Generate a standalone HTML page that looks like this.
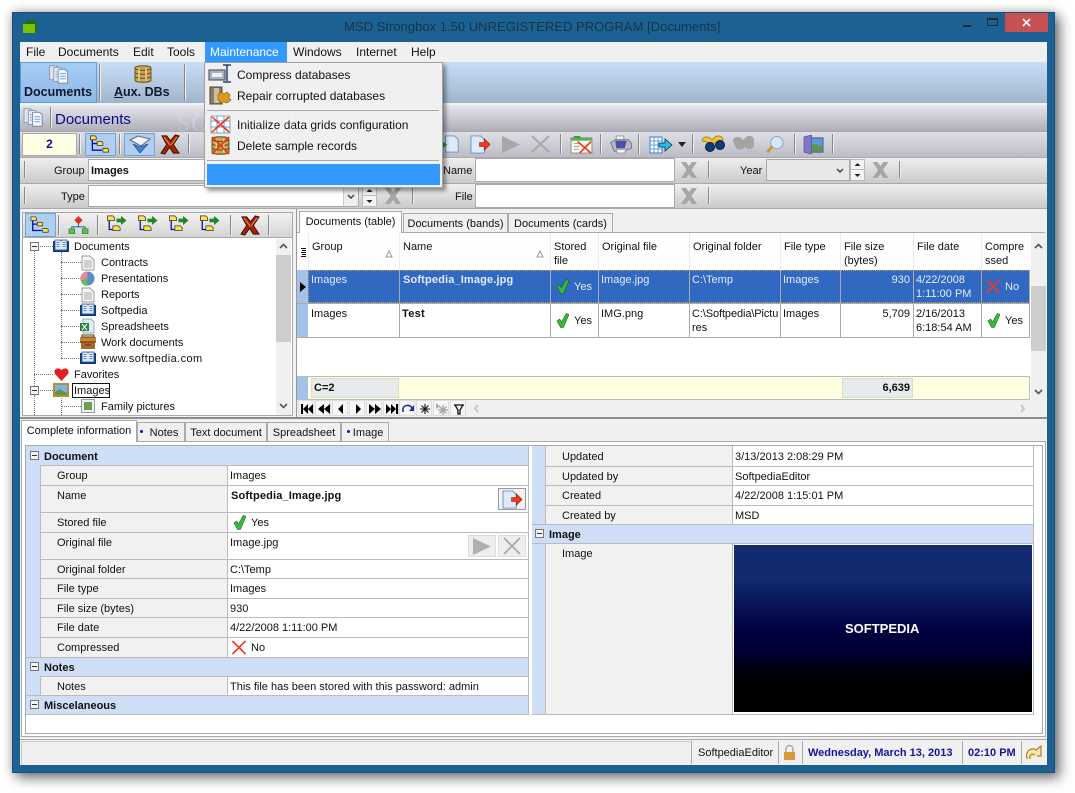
<!DOCTYPE html>
<html><head><meta charset="utf-8"><title>MSD Strongbox</title>
<style>
html,body{margin:0;padding:0;width:1075px;height:793px;overflow:hidden;background:#fff}
body{font:11px/14px "Liberation Sans",sans-serif;color:#111;position:relative}
div,span.a,svg.a{position:absolute;box-sizing:border-box}
.t{white-space:nowrap;height:14px;line-height:14px;margin-top:1px}
.m{font-size:12px;margin-top:0}
.b{font-weight:bold}
.w{color:#e4ecf8}
.l{background:#aaa}
.sep{width:1px;background:#888;border-right:1px solid #eee;width:2px}
.tab{background:#f0f0f0;border:1px solid #aaa;border-bottom:0;text-align:center;line-height:21px;white-space:nowrap}
.gridc{background:#fff}
.lab{background:#f1f1f1}
.sec{background:#cddef6}
.box{width:9px;height:9px;border:1px solid #777;background:#f4f4f4}
.box:after{content:"";position:absolute;left:1px;top:3px;width:5px;height:1px;background:#333}
.dh{border-top:1px dotted #777;height:1px}
.dv{border-left:1px dotted #777;width:1px}
.inp{background:#fff;border:1px solid #aaa}
.nb{width:16px;height:16px;top:400px;background:#f6f6f6;border:1px solid #ddd}
.nb svg{position:absolute;left:1px;top:1px}
</style></head>
<body>
<svg width="0" height="0" style="position:absolute">
<defs>
<symbol id="chk" viewBox="0 0 14 16"><path d="M1 9l3-2 2 3 5-9 3 1-6 14H5z" fill="#3cb83c" stroke="#0c6a12" stroke-width=".6"/></symbol>
<symbol id="rx" viewBox="0 0 16 16"><path d="M1 1l14 14M15 1L1 15" stroke="#ee3a1c" stroke-width="1.800" fill="none"/></symbol>
<symbol id="gx" viewBox="0 0 20 20"><path d="M2 2h5l3 4 3-4h5l-5.500 8L18 18h-5l-3-4-3 4H2l5.500-8z" fill="#a6a6a6"/></symbol>
<symbol id="bx" viewBox="0 0 22 22"><path d="M2 2h5l4 5 5-6 4 1-6 9 6 9h-6l-4-6-5 7-4-1 6-9z" fill="#a12408" stroke="#3b1000" stroke-width="1"/><path d="M4 3l7 9M18 3l-6 8" stroke="#f0a060" stroke-width="1"/></symbol>
<symbol id="tr" viewBox="0 0 22 22"><path d="M3 5v12h10M3 10h6" stroke="#0c0ca0" stroke-width="1.400" fill="none"/><path d="M1 2h5l1 1v3H1zM8 8h5l1 1v3H8zM14 15h5l1 1v3h-6z" fill="#ffe24a" stroke="#333" stroke-width=".8"/></symbol>
<symbol id="doc" viewBox="0 0 24 22"><path d="M1 1h8l2 2v14H1z" fill="#dde4f0" stroke="#8a94a8"/><path d="M6 3h8l2 2v14H6z" fill="#e6ecf8" stroke="#8a94a8"/><path d="M11 5h8l3 3v13H11z" fill="#f4f8ff" stroke="#6f7ea0"/><path d="M13 10h7M13 13h7M13 16h7M8 8h2M8 11h2M8 14h2" stroke="#5c9ae0"/></symbol>
<symbol id="db" viewBox="0 0 18 18"><path d="M1 3c0-3 16-3 16 0v12c0 3-16 3-16 0z" fill="#c6a45a" stroke="#6c5416"/><path d="M1 3c0 3 16 3 16 0M1 7c0 3 16 3 16 0M1 11c0 3 16 3 16 0" fill="none" stroke="#6c5416"/><path d="M5 3v13M12 3v13" stroke="#e8d08c" stroke-width="1.500"/></symbol>
<symbol id="book" viewBox="0 0 16 14"><path d="M0 2h16v11H0z" fill="#123c78"/><path d="M2 1h5.500l.5 1 .5-1H14v10H2z" fill="#d9e8f8" stroke="#1f4c8a" stroke-width=".7"/><path d="M3.500 3.500h3M3.500 5.500h3M3.500 7.500h3M9.500 3.500h3M9.500 5.500h3M9.500 7.500h3" stroke="#6b8fbb"/></symbol>
<symbol id="pg" viewBox="0 0 14 16"><path d="M1 1h8l4 4v10H1z" fill="#f6f6f6" stroke="#999"/><path d="M3 6h8M3 8h8M3 10h8M3 12h8" stroke="#aaa"/></symbol>
<symbol id="pgr" viewBox="0 0 22 20"><path d="M1 1h10l4 4v14H1z" fill="#dfeafa" stroke="#6a90c8"/><path d="M10 8h5V4l6 6-6 6v-4h-5z" fill="#ee3a22" stroke="#a01808" stroke-width=".7"/></symbol>
<symbol id="pgg" viewBox="0 0 22 20"><path d="M5 1h10l4 4v14H5z" fill="#dfeafa" stroke="#6a90c8"/><path d="M1 7v8l6-4z" fill="#1b9a30"/></symbol>
<symbol id="tbl" viewBox="0 0 24 18"><path d="M1 1h12v16H1z" fill="#fff" stroke="#3a7ccc"/><path d="M1 5h12M1 9h12M1 13h12M5 1v16M9 1v16" stroke="#5aa0e8"/><path d="M10 7h6V3l7 6-7 6v-4h-6z" fill="#24c0ea" stroke="#103050" stroke-width=".8"/></symbol>
<symbol id="pgx" viewBox="0 0 24 20"><path d="M1 3h22v16H1z" fill="#faf8ef" stroke="#888"/><path d="M1 3h22v3H1z" fill="#5cb05c"/><path d="M4 1h6l2 2H4z" fill="#3c9a3c"/><path d="M4 9h7M4 12h6M4 15h5" stroke="#a0a0a0"/><path d="M8 7l14 12M22 7L10 19" stroke="#ee4020" stroke-width="1.800"/></symbol>
<symbol id="prt" viewBox="0 0 24 20"><path d="M7 1h8v6H7z" fill="#eee" stroke="#999"/><path d="M1 8l5-3h14l3 4v5l-8 3H5z" fill="#b6bac2" stroke="#777"/><path d="M6 6h12l-2 8H7z" fill="#4a50a8"/><path d="M8 15h10l-3 4H7z" fill="#f4f4f4" stroke="#999"/></symbol>
<symbol id="bin" viewBox="0 0 24 18"><path d="M1 6c0-4 5-5 8-3l2 2 3-3c3-2 8-1 8 3l-5 3H9z" fill="#f2c232" stroke="#a67c10" stroke-width=".8"/><circle cx="9" cy="12" r="4.500" fill="#123c78" stroke="#0a1c40"/><circle cx="19" cy="10" r="4.500" fill="#123c78" stroke="#0a1c40"/></symbol>
<symbol id="gbin" viewBox="0 0 24 18"><path d="M1 6c0-4 5-5 8-3l2 2 3-3c3-2 8-1 8 3v6c-2 4-7 4-9 1-2 4-9 3-10-1z" fill="#a4a4a4"/><path d="M16 16h1M19 16h1M22 16h1" stroke="#999"/></symbol>
<symbol id="mag" viewBox="0 0 20 20"><circle cx="12" cy="8" r="6.500" fill="#d4e8f4" stroke="#8aa4b8"/><path d="M7 12l-5 6" stroke="#d89030" stroke-width="3"/></symbol>
<symbol id="door" viewBox="0 0 22 20"><path d="M7 3h14v15H7z" fill="#5b9ad8" stroke="#50508a"/><path d="M8 12l5-3 7 4v4H8z" fill="#5c9a40"/><path d="M1 2l8-2v20l-8-2z" fill="#7c78c8" stroke="#50508a" stroke-width=".7"/></symbol>
<symbol id="img" viewBox="0 0 16 14"><path d="M0 0h16v14H0z" fill="#b88a3c"/><path d="M2 2h12v10H2z" fill="#7cb4e8"/><path d="M2 9l4-3 8 4v2H2z" fill="#5c9a40"/></symbol>
<symbol id="pic" viewBox="0 0 14 14"><path d="M.500.500h13v13H.500z" fill="#eef2f6" stroke="#999"/><path d="M3 3h8v8H3z" fill="#6ca050"/></symbol>
<symbol id="org" viewBox="0 0 22 20"><path d="M11 1l4 4-4 4-4-4z" fill="#ee2a10" stroke="#a01808" stroke-width=".5"/><path d="M11 9v3M4 16v-4h14v4" stroke="#1060a0" fill="none"/><path d="M1 14h6v5H1zM15 14h6v5h-6z" fill="#5cc050" stroke="#2a8020" stroke-width=".7"/></symbol>
<symbol id="arr" viewBox="0 0 22 22"><path d="M3 3v13h6" stroke="#0c0ca0" stroke-width="1.400" fill="none"/><path d="M1 1h6l2 2v3H1zM7 12h6l2 2v3H7z" fill="#ffe24a" stroke="#333" stroke-width=".8"/><path d="M11 4h5V1l6 5-6 5V8h-5z" fill="#1c8a24"/></symbol>
</defs>
</svg>

<!-- window -->
<div style="left:12px;top:12px;width:1043px;height:761px;background:#1b6192;border:1px solid #175078;box-shadow:5px 5px 12px rgba(0,0,0,.5),0 0 10px rgba(0,0,0,.25)"></div>
<svg class="a" style="left:23px;top:19px" width="14" height="15" viewBox="0 0 14 15"><path d="M3 1h10v5H3z" fill="#1d6a20"/><path d="M0 5h12v9H0z" fill="#7cc000"/><path d="M12 6h2v6l-2 2z" fill="#2e6a10"/></svg>
<div class="t" style="left:344px;top:19px;font-size:13.050px;line-height:16px;height:16px;color:#16344a;margin-top:0">MSD Strongbox 1.50 UNREGISTERED PROGRAM [Documents]</div>
<div style="left:963px;top:25px;width:8px;height:2px;background:#1c2c38"></div>
<div style="left:987px;top:18px;width:11px;height:8px;border:1px solid #1c2c38;border-top-width:2px"></div>
<div style="left:1005px;top:13px;width:43px;height:19px;background:#c75050"></div>
<svg class="a" style="left:1022px;top:18px" width="9" height="9"><path d="M1 1l7 7M8 1L1 8" stroke="#fff" stroke-width="1.600"/></svg>

<!-- client -->
<div style="left:20px;top:42px;width:1027px;height:723px;background:#f0f0f0"></div>

<!-- menu bar -->
<div style="left:205px;top:42px;width:82px;height:20px;background:#3399ff"></div>
<div class="t m" style="left:26px;top:45px">File</div>
<div class="t m" style="left:58px;top:45px">Documents</div>
<div class="t m" style="left:133px;top:45px">Edit</div>
<div class="t m" style="left:167px;top:45px">Tools</div>
<div class="t m" style="left:210px;top:45px;color:#fff">Maintenance</div>
<div class="t m" style="left:293px;top:45px">Windows</div>
<div class="t m" style="left:356px;top:45px">Internet</div>
<div class="t m" style="left:411px;top:45px">Help</div>

<!-- big toolbar -->
<div style="left:20px;top:62px;width:1027px;height:41px;background:linear-gradient(#c9def8,#a1b4cc)"></div>
<div style="left:20px;top:62px;width:77px;height:41px;background:linear-gradient(#a6cdf4,#8fb8e4);border:1px solid #5c9cdc"></div>
<div class="sep" style="left:99px;top:64px;height:37px"></div>
<div class="sep" style="left:184px;top:64px;height:37px"></div>
<svg class="a" style="left:47px;top:65px" width="24" height="19"><use href="#doc" width="24" height="19"/></svg>
<svg class="a" style="left:134px;top:65px" width="18" height="18"><use href="#db" width="18" height="18"/></svg>
<div class="t b m" style="left:24px;top:85px;font-size:12.500px;color:#0e1830">Documents</div>
<div class="t b m" style="left:114px;top:85px;font-size:12.500px;color:#0e1830"><span style="text-decoration:underline">A</span>ux. DBs</div>

<!-- header band -->
<div style="left:20px;top:104px;width:1027px;height:27px;background:linear-gradient(#e6e6ee,#aeaeb8);border-top:1px solid #f4f4f4"></div>
<svg class="a" style="left:22px;top:108px" width="23" height="19"><use href="#doc" width="23" height="19"/></svg>
<div class="sep" style="left:50px;top:107px;height:21px"></div>
<div class="t" style="left:55px;top:110px;font-size:15px;line-height:18px;height:18px;color:#0a0a88">Documents</div>

<!-- toolbar -->
<div style="left:20px;top:131px;width:1027px;height:26px;background:linear-gradient(#dfdfe7,#bcbcc6);border-top:1px solid #aaa"></div>
<div style="left:22px;top:133px;width:55px;height:23px;background:#ffffe6;border:1px solid #aaa;text-align:center;font-weight:bold;color:#10108a;font-size:12px;line-height:21px">2</div>
<div class="sep" style="left:79px;top:134px;height:20px"></div>
<div style="left:85px;top:133px;width:31px;height:23px;background:#b0cfee;border:1px solid #6aa6de"></div>
<svg class="a" style="left:89px;top:134px" width="22" height="21"><use href="#tr" width="22" height="21"/></svg>
<div class="sep" style="left:119px;top:134px;height:20px"></div>
<div style="left:124px;top:133px;width:31px;height:23px;background:#b0cfee;border:1px solid #6aa6de"></div>
<svg class="a" style="left:129px;top:135px" width="22" height="19" viewBox="0 0 22 19"><path d="M1 5l8-4 12 3-9 7z" fill="#f2f2f2" stroke="#667"/><path d="M4 9l7 9 8-9-8 3z" fill="#3a86d8" stroke="#1a4a90" stroke-width=".7"/></svg>
<svg class="a" style="left:160px;top:134px" width="21" height="21"><use href="#bx" width="21" height="21"/></svg>
<div class="sep" style="left:188px;top:134px;height:20px"></div>
<svg class="a" style="left:441px;top:135px" width="20" height="18"><use href="#pgg" width="20" height="18"/></svg>
<svg class="a" style="left:469px;top:135px" width="23" height="19"><use href="#pgr" width="23" height="19"/></svg>
<svg class="a" style="left:501px;top:135px" width="20" height="18"><path d="M1 1l18 8.500L1 18z" fill="#a8a8a8"/></svg>
<svg class="a" style="left:531px;top:135px" width="19" height="18"><path d="M1 1l17 16M18 1L1 17" stroke="#a8a8a8" stroke-width="2"/></svg>
<div class="sep" style="left:560px;top:134px;height:20px"></div>
<svg class="a" style="left:570px;top:135px" width="23" height="19"><use href="#pgx" width="23" height="19"/></svg>
<div class="sep" style="left:600px;top:134px;height:20px"></div>
<svg class="a" style="left:609px;top:135px" width="24" height="19"><use href="#prt" width="24" height="19"/></svg>
<div class="sep" style="left:638px;top:134px;height:20px"></div>
<svg class="a" style="left:649px;top:136px" width="24" height="18"><use href="#tbl" width="24" height="18"/></svg>
<svg class="a" style="left:678px;top:142px" width="8" height="5"><path d="M0 0h8L4 5z" fill="#222"/></svg>
<div class="sep" style="left:692px;top:134px;height:20px"></div>
<svg class="a" style="left:701px;top:135px" width="24" height="18"><use href="#bin" width="24" height="18"/></svg>
<svg class="a" style="left:732px;top:135px" width="24" height="18"><use href="#gbin" width="24" height="18"/></svg>
<svg class="a" style="left:765px;top:135px" width="20" height="19"><use href="#mag" width="20" height="19"/></svg>
<div class="sep" style="left:794px;top:134px;height:20px"></div>
<svg class="a" style="left:803px;top:135px" width="21" height="19"><use href="#door" width="21" height="19"/></svg>
<div class="sep" style="left:832px;top:134px;height:20px"></div>

<!-- filter rows -->
<div style="left:20px;top:157px;width:1027px;height:26px;background:linear-gradient(#efefef,#cacaca);border-top:1px solid #aaa"></div>
<div style="left:20px;top:183px;width:1027px;height:26px;background:linear-gradient(#efefef,#cacaca);border-top:1px solid #aaa;border-bottom:1px solid #aaa"></div>
<div class="sep" style="left:24px;top:161px;height:17px"></div>
<div class="sep" style="left:24px;top:187px;height:17px"></div>
<div class="t" style="left:54px;top:163px">Group</div>
<div class="inp" style="left:88px;top:159px;width:130px;height:22px"></div>
<div class="t b" style="left:91px;top:163px">Images</div>
<div class="t" style="left:61px;top:189px">Type</div>
<div class="inp" style="left:88px;top:185px;width:271px;height:22px"></div>
<div style="left:343px;top:186px;width:15px;height:20px;background:#eee;border-left:1px solid #ccc"></div>
<svg class="a" style="left:347px;top:194px" width="8" height="5"><path d="M1 1l3 3 3-3" stroke="#444" stroke-width="1.500" fill="none"/></svg>
<div style="left:362px;top:185px;width:15px;height:22px;background:#f4f4f4;border:1px solid #bbb"></div>
<div style="left:363px;top:195px;width:13px;height:1px;background:#bbb"></div>
<svg class="a" style="left:366px;top:188px" width="7" height="16"><path d="M3.500 1L6.500 4H.500zM.500 12h6L3.500 15z" fill="#222"/></svg>
<svg class="a" style="left:383px;top:186px" width="20" height="20"><use href="#gx" width="20" height="20"/></svg>
<div class="sep" style="left:412px;top:187px;height:17px"></div>
<div class="t" style="left:443px;top:163px">Name</div>
<div class="t" style="left:455px;top:189px">File</div>
<div class="inp" style="left:475px;top:158px;width:200px;height:24px"></div>
<div class="inp" style="left:475px;top:184px;width:200px;height:24px"></div>
<svg class="a" style="left:679px;top:160px" width="20" height="20"><use href="#gx" width="20" height="20"/></svg>
<svg class="a" style="left:679px;top:186px" width="20" height="20"><use href="#gx" width="20" height="20"/></svg>
<div class="sep" style="left:708px;top:161px;height:17px"></div>
<div class="sep" style="left:708px;top:187px;height:17px"></div>
<div class="t" style="left:740px;top:163px">Year</div>
<div style="left:766px;top:159px;width:84px;height:22px;background:#e8e8e8;border:1px solid #aaa"></div>
<svg class="a" style="left:836px;top:168px" width="8" height="5"><path d="M1 1l3 3 3-3" stroke="#444" stroke-width="1.500" fill="none"/></svg>
<div style="left:850px;top:159px;width:15px;height:22px;background:#f4f4f4;border:1px solid #bbb"></div>
<div style="left:851px;top:169px;width:13px;height:1px;background:#bbb"></div>
<svg class="a" style="left:854px;top:162px" width="7" height="16"><path d="M3.500 1L6.500 4H.500zM.500 12h6L3.500 15z" fill="#222"/></svg>
<svg class="a" style="left:870px;top:160px" width="21" height="20"><use href="#gx" width="21" height="20"/></svg>
<div class="sep" style="left:899px;top:161px;height:17px"></div>

<!-- tree panel -->
<div style="left:22px;top:212px;width:271px;height:204px;background:#fff;border:1px solid #aaa"></div>
<div style="left:23px;top:213px;width:269px;height:25px;background:linear-gradient(#f2f2f2,#d4d4d4);border-bottom:1px solid #aaa"></div>
<div style="left:25px;top:213px;width:31px;height:24px;background:#b0cfee;border:1px solid #6aa6de"></div>
<svg class="a" style="left:29px;top:215px" width="22" height="20"><use href="#tr" width="22" height="20"/></svg>
<div class="sep" style="left:58px;top:215px;height:20px"></div>
<svg class="a" style="left:68px;top:215px" width="21" height="20"><use href="#org" width="21" height="20"/></svg>
<div class="sep" style="left:97px;top:215px;height:20px"></div>
<svg class="a" style="left:106px;top:215px" width="21" height="20"><use href="#arr" width="21" height="20"/></svg>
<svg class="a" style="left:137px;top:215px" width="21" height="20"><use href="#arr" width="21" height="20"/></svg>
<svg class="a" style="left:168px;top:215px" width="21" height="20"><use href="#arr" width="21" height="20"/></svg>
<svg class="a" style="left:199px;top:215px" width="21" height="20"><use href="#arr" width="21" height="20"/></svg>
<div class="sep" style="left:230px;top:215px;height:20px"></div>
<svg class="a" style="left:240px;top:215px" width="21" height="21"><use href="#bx" width="21" height="21"/></svg>
<div class="sep" style="left:268px;top:215px;height:20px"></div>

<div class="dv" style="left:34px;top:250px;height:140px"></div>
<div class="dv" style="left:34px;top:395px;height:20px"></div>
<div class="dv" style="left:61px;top:252px;height:106px"></div>
<div class="dv" style="left:61px;top:396px;height:19px"></div>
<div class="dh" style="left:38px;top:246px;width:15px"></div>
<div class="dh" style="left:34px;top:374px;width:19px"></div>
<div class="dh" style="left:38px;top:390px;width:15px"></div>
<div class="dh" style="left:61px;top:262px;width:20px"></div>
<div class="dh" style="left:61px;top:278px;width:20px"></div>
<div class="dh" style="left:61px;top:294px;width:20px"></div>
<div class="dh" style="left:61px;top:310px;width:20px"></div>
<div class="dh" style="left:61px;top:326px;width:20px"></div>
<div class="dh" style="left:61px;top:342px;width:20px"></div>
<div class="dh" style="left:61px;top:358px;width:20px"></div>
<div class="dh" style="left:61px;top:406px;width:20px"></div>
<div class="box" style="left:30px;top:242px"></div>
<div class="box" style="left:30px;top:386px"></div>
<svg class="a" style="left:53px;top:239px" width="16" height="14"><use href="#book" width="16" height="14"/></svg>
<svg class="a" style="left:81px;top:255px" width="14" height="16"><use href="#pg" width="14" height="16"/></svg>
<svg class="a" style="left:80px;top:271px" width="15" height="15" viewBox="0 0 15 15"><circle cx="7.500" cy="7.500" r="7" fill="#5a8cd0"/><path d="M7.500 7.500V.500A7 7 0 0 0 1 10z" fill="#e88a9a"/><path d="M7.500 7.500L1 10a7 7 0 0 0 6 5z" fill="#60c050"/></svg>
<svg class="a" style="left:81px;top:287px" width="14" height="16"><use href="#pg" width="14" height="16"/></svg>
<svg class="a" style="left:80px;top:303px" width="16" height="14"><use href="#book" width="16" height="14"/></svg>
<svg class="a" style="left:80px;top:318px" width="15" height="16" viewBox="0 0 15 16"><path d="M3 1h8l3 3v11H3z" fill="#e0ecf4" stroke="#9ab"/><path d="M0 5h9v8H0z" fill="#2a8040"/><path d="M2 6l5 6M7 6l-5 6" stroke="#fff"/></svg>
<svg class="a" style="left:80px;top:334px" width="16" height="16" viewBox="0 0 16 16"><path d="M0 3h16v5H0z" fill="#c48434"/><path d="M1 8h14v7H1z" fill="#a8682a"/><path d="M2 1h12v2H2zM0 8h16M5 11h6" stroke="#5a3410" fill="none"/></svg>
<svg class="a" style="left:80px;top:351px" width="16" height="14"><use href="#book" width="16" height="14"/></svg>
<svg class="a" style="left:54px;top:367px" width="15" height="14"><path d="M7.500 14L1 7C-1 3 3-1 7.500 3 12-1 16 3 14 7z" fill="#e02020"/></svg>
<svg class="a" style="left:53px;top:383px" width="16" height="14"><use href="#img" width="16" height="14"/></svg>
<svg class="a" style="left:81px;top:399px" width="14" height="14"><use href="#pic" width="14" height="14"/></svg>
<div class="t" style="left:74px;top:239px">Documents</div>
<div class="t" style="left:101px;top:255px">Contracts</div>
<div class="t" style="left:101px;top:271px">Presentations</div>
<div class="t" style="left:101px;top:287px">Reports</div>
<div class="t" style="left:101px;top:303px">Softpedia</div>
<div class="t" style="left:101px;top:319px">Spreadsheets</div>
<div class="t" style="left:101px;top:335px">Work documents</div>
<div class="t" style="left:101px;top:351px;letter-spacing:.4px">www.softpedia.com</div>
<div class="t" style="left:74px;top:367px">Favorites</div>
<div style="left:72px;top:383px;width:38px;height:15px;border:1px solid #111"></div>
<div class="t" style="left:74px;top:383px">Images</div>
<div class="t" style="left:101px;top:399px">Family pictures</div>
<div style="left:276px;top:239px;width:15px;height:176px;background:#f0f0f0"></div>
<div style="left:276px;top:255px;width:15px;height:87px;background:#cdcdcd"></div>
<svg class="a" style="left:279px;top:243px" width="9" height="6"><path d="M1 5l3.500-3.500L8 5" stroke="#555" stroke-width="1.600" fill="none"/></svg>
<svg class="a" style="left:279px;top:403px" width="9" height="6"><path d="M1 1l3.500 3.500L8 1" stroke="#555" stroke-width="1.600" fill="none"/></svg>

<!-- grid tabs -->
<div class="tab" style="left:403px;top:213px;width:105px;height:20px">Documents (bands)</div>
<div class="tab" style="left:508px;top:213px;width:105px;height:20px">Documents (cards)</div>
<div style="left:297px;top:232px;width:748px;height:1px;background:#aaa"></div>
<div style="left:297px;top:233px;width:748px;height:167px;background:#fff;border-right:1px solid #aaa"></div>
<div class="tab" style="left:299px;top:211px;width:103px;height:22px;background:#fff;border-bottom:0;line-height:20px">Documents (table)</div>
<div style="left:296px;top:209px;width:1px;height:208px;background:#999"></div>

<!-- grid head -->
<div style="left:297px;top:233px;width:733px;height:37px;background:#fefefe"></div>
<div style="left:308px;top:233px;width:1px;height:37px;background:#e2eefc"></div>
<div style="left:399px;top:233px;width:1px;height:37px;background:#e2eefc"></div>
<div style="left:550px;top:233px;width:1px;height:37px;background:#e2eefc"></div>
<div style="left:598px;top:233px;width:1px;height:37px;background:#e2eefc"></div>
<div style="left:689px;top:233px;width:1px;height:37px;background:#e2eefc"></div>
<div style="left:780px;top:233px;width:1px;height:37px;background:#e2eefc"></div>
<div style="left:840px;top:233px;width:1px;height:37px;background:#e2eefc"></div>
<div style="left:913px;top:233px;width:1px;height:37px;background:#e2eefc"></div>
<div style="left:981px;top:233px;width:1px;height:37px;background:#e2eefc"></div>
<svg class="a" style="left:300px;top:247px" width="7" height="11"><path d="M1 1.500h5M2 3.500h4M1 5.500h5M2 7.500h4M1 9.500h5" stroke="#111"/></svg>
<svg class="a" style="left:385px;top:250px" width="8" height="8"><path d="M4 1l3 6H1z" fill="none" stroke="#999"/></svg>
<svg class="a" style="left:536px;top:250px" width="8" height="8"><path d="M4 1l3 6H1z" fill="none" stroke="#999"/></svg>
<div class="t" style="left:312px;top:239px">Group</div>
<div class="t" style="left:403px;top:239px">Name</div>
<div class="t" style="left:554px;top:239px">Stored</div>
<div class="t" style="left:554px;top:253px">file</div>
<div class="t" style="left:602px;top:239px">Original file</div>
<div class="t" style="left:693px;top:239px">Original folder</div>
<div class="t" style="left:784px;top:239px">File type</div>
<div class="t" style="left:844px;top:239px">File size</div>
<div class="t" style="left:844px;top:253px">(bytes)</div>
<div class="t" style="left:917px;top:239px">File date</div>
<div class="t" style="left:985px;top:239px">Compre</div>
<div class="t" style="left:985px;top:253px">ssed</div>

<!-- rows -->
<div style="left:297px;top:270px;width:11px;height:33px;background:#a2c2ea"></div>
<div style="left:297px;top:304px;width:11px;height:33px;background:#a2c2ea"></div>
<svg class="a" style="left:300px;top:282px" width="6" height="10"><path d="M0 0l6 5-6 5z" fill="#000"/></svg>
<div style="left:308px;top:270px;width:722px;height:33px;background:#3068c2;border:1px dotted #c9a24c"></div>
<div class="l" style="left:399px;top:270px;width:1px;height:67px"></div>
<div class="l" style="left:550px;top:270px;width:1px;height:67px"></div>
<div class="l" style="left:598px;top:270px;width:1px;height:67px"></div>
<div class="l" style="left:689px;top:270px;width:1px;height:67px"></div>
<div class="l" style="left:780px;top:270px;width:1px;height:67px"></div>
<div class="l" style="left:840px;top:270px;width:1px;height:67px"></div>
<div class="l" style="left:913px;top:270px;width:1px;height:67px"></div>
<div class="l" style="left:981px;top:270px;width:1px;height:67px"></div>
<div class="l" style="left:1029px;top:270px;width:1px;height:67px"></div>
<div class="l" style="left:297px;top:303px;width:733px;height:1px"></div>
<div class="l" style="left:297px;top:337px;width:733px;height:1px"></div>
<div class="t w" style="left:311px;top:272px">Images</div>
<div class="t w b" style="left:403px;top:272px;letter-spacing:.15px">Softpedia_Image.jpg</div>
<div class="t w" style="left:574px;top:279px">Yes</div>
<div class="t w" style="left:601px;top:272px">Image.jpg</div>
<div class="t w" style="left:692px;top:272px">C:\Temp</div>
<div class="t w" style="left:783px;top:272px">Images</div>
<div class="t w" style="left:840px;top:272px;width:70px;text-align:right">930</div>
<div class="t w" style="left:916px;top:272px">4/22/2008</div>
<div class="t w" style="left:916px;top:286px">1:11:00 PM</div>
<div class="t w" style="left:1005px;top:279px">No</div>
<svg class="a" style="left:556px;top:278px" width="13" height="16"><use href="#chk" width="13" height="16"/></svg>
<svg class="a" style="left:985px;top:279px" width="16" height="15"><use href="#rx" width="16" height="15"/></svg>
<div class="t" style="left:311px;top:306px">Images</div>
<div class="t b" style="left:402px;top:306px;letter-spacing:.3px">Test</div>
<div class="t" style="left:574px;top:313px">Yes</div>
<div class="t" style="left:601px;top:306px">IMG.png</div>
<div class="t" style="left:692px;top:306px;letter-spacing:-.1px">C:\Softpedia\Pictu</div>
<div class="t" style="left:692px;top:320px">res</div>
<div class="t" style="left:783px;top:306px">Images</div>
<div class="t" style="left:840px;top:306px;width:70px;text-align:right">5,709</div>
<div class="t" style="left:916px;top:306px">2/16/2013</div>
<div class="t" style="left:916px;top:320px">6:18:54 AM</div>
<div class="t" style="left:1005px;top:313px">Yes</div>
<svg class="a" style="left:556px;top:312px" width="13" height="16"><use href="#chk" width="13" height="16"/></svg>
<svg class="a" style="left:987px;top:312px" width="13" height="16"><use href="#chk" width="13" height="16"/></svg>

<!-- footer -->
<div style="left:297px;top:376px;width:733px;height:24px;background:#ffffe2;border:1px solid #bbb;border-left:0"></div>
<div style="left:297px;top:377px;width:11px;height:22px;background:#a2c2ea"></div>
<div class="t b" style="left:311px;top:378px;width:88px;height:20px;background:#e8ebeb;border:1px solid #dcdcc4;line-height:19px;padding-left:2px;margin-top:0">C=2</div>
<div class="t b" style="left:842px;top:378px;width:71px;height:20px;background:#e8ebeb;border:1px solid #dcdcc4;line-height:19px;text-align:right;padding-right:2px;margin-top:0">6,639</div>
<div style="left:1031px;top:233px;width:15px;height:167px;background:#f0f0f0"></div>
<div style="left:1031px;top:286px;width:15px;height:65px;background:#cdcdcd"></div>
<svg class="a" style="left:1034px;top:243px" width="9" height="6"><path d="M1 5l3.500-3.500L8 5" stroke="#555" stroke-width="1.600" fill="none"/></svg>
<svg class="a" style="left:1034px;top:389px" width="9" height="6"><path d="M1 1l3.500 3.500L8 1" stroke="#555" stroke-width="1.600" fill="none"/></svg>

<!-- nav -->
<div class="nb" style="left:298px"><svg width="14" height="14"><path d="M1 2h2v10H1zM8 2v10L3 7zM13 2v10L8 7z" fill="#000"/></svg></div>
<div class="nb" style="left:315px"><svg width="14" height="14"><path d="M7 2v10L1 7zM13 2v10L7 7z" fill="#000"/></svg></div>
<div class="nb" style="left:332px"><svg width="14" height="14"><path d="M9 2v10L4 7z" fill="#000"/></svg></div>
<div class="nb" style="left:349px"><svg width="14" height="14"><path d="M5 2v10l5-5z" fill="#000"/></svg></div>
<div class="nb" style="left:366px"><svg width="14" height="14"><path d="M1 2v10l6-5zM7 2v10l6-5z" fill="#000"/></svg></div>
<div class="nb" style="left:383px"><svg width="14" height="14"><path d="M1 2v10l5-5zM6 2v10l5-5zM11 2h2v10h-2z" fill="#000"/></svg></div>
<div class="nb" style="left:399px"><svg width="14" height="14"><path d="M2 10V7c0-4 7-5 9-1" fill="none" stroke="#16309a" stroke-width="1.600"/><path d="M13 3v6H8z" fill="#16309a"/></svg></div>
<div class="nb" style="left:416px"><svg width="14" height="14"><path d="M7 2v10M2 7h10M3.500 3.500l7 7M10.500 3.500l-7 7" stroke="#111" stroke-width="1.100"/></svg></div>
<div class="nb" style="left:433px"><svg width="14" height="14"><path d="M8 3v10M3 8h10M4.500 4.500l7 7M11.500 4.500l-7 7" stroke="#aaa" stroke-width="1.500"/><path d="M1 1l4 3-4 3z" fill="#aaa"/></svg></div>
<div class="nb" style="left:450px"><svg width="14" height="14"><path d="M2 3h10M3 3l3 5v4h2V8l3-5" fill="none" stroke="#111" stroke-width="1.300"/></svg></div>
<svg class="a" style="left:473px;top:404px" width="7" height="9"><path d="M5 1L2 4.500 5 8" stroke="#c4c4c4" stroke-width="1.800" fill="none"/></svg>
<svg class="a" style="left:1019px;top:404px" width="7" height="9"><path d="M2 1l3 3.500L2 8" stroke="#c4c4c4" stroke-width="1.800" fill="none"/></svg>

<!-- splitter -->
<div style="left:20px;top:417px;width:1027px;height:2px;background:#8c8c8c"></div>

<!-- bottom tabs -->
<div class="tab" style="left:137px;top:422px;width:48px;height:20px">&nbsp;&nbsp;Notes</div>
<div class="tab" style="left:185px;top:422px;width:82px;height:20px">Text document</div>
<div class="tab" style="left:267px;top:422px;width:74px;height:20px">Spreadsheet</div>
<div class="tab" style="left:341px;top:422px;width:48px;height:20px">&nbsp;&nbsp;Image</div>
<div style="left:140px;top:430px;width:3px;height:3px;background:#1010c0;border-radius:2px"></div>
<div style="left:347px;top:430px;width:3px;height:3px;background:#1010c0;border-radius:2px"></div>
<div style="left:21px;top:441px;width:1025px;height:296px;background:#fff;border:1px solid #aaa"></div>
<div style="left:25px;top:445px;width:1018px;height:289px;background:#fff;border:1px solid #aaa"></div>
<div class="tab" style="left:21px;top:420px;width:116px;height:22px;background:#fff;border-bottom:0;line-height:20px">Complete information</div>

<!-- detail left -->
<div class="sec" style="left:26px;top:446px;width:503px;height:19px"></div>
<div class="sec" style="left:26px;top:465px;width:15px;height:192px"></div>
<div class="sec" style="left:26px;top:657px;width:503px;height:19px"></div>
<div class="sec" style="left:26px;top:676px;width:15px;height:19px"></div>
<div class="sec" style="left:26px;top:695px;width:503px;height:19px"></div>
<div class="lab" style="left:41px;top:465px;width:187px;height:192px"></div>
<div class="lab" style="left:41px;top:676px;width:187px;height:19px"></div>
<div class="l" style="left:40px;top:465px;width:1px;height:192px;background:#bbb"></div>
<div class="l" style="left:40px;top:676px;width:1px;height:19px;background:#bbb"></div>
<div class="l" style="left:227px;top:465px;width:1px;height:192px;background:#bbb"></div>
<div class="l" style="left:227px;top:676px;width:1px;height:19px;background:#bbb"></div>
<div class="l" style="left:528px;top:446px;width:1px;height:268px;background:#bbb"></div>
<div class="l" style="left:41px;top:465px;width:488px;height:1px;background:#bbb"></div>
<div class="l" style="left:41px;top:485px;width:488px;height:1px;background:#bbb"></div>
<div class="l" style="left:41px;top:512px;width:488px;height:1px;background:#bbb"></div>
<div class="l" style="left:41px;top:532px;width:488px;height:1px;background:#bbb"></div>
<div class="l" style="left:41px;top:559px;width:488px;height:1px;background:#bbb"></div>
<div class="l" style="left:41px;top:578px;width:488px;height:1px;background:#bbb"></div>
<div class="l" style="left:41px;top:598px;width:488px;height:1px;background:#bbb"></div>
<div class="l" style="left:41px;top:617px;width:488px;height:1px;background:#bbb"></div>
<div class="l" style="left:41px;top:637px;width:488px;height:1px;background:#bbb"></div>
<div class="l" style="left:26px;top:657px;width:503px;height:1px;background:#bbb"></div>
<div class="l" style="left:41px;top:676px;width:488px;height:1px;background:#bbb"></div>
<div class="l" style="left:26px;top:695px;width:503px;height:1px;background:#bbb"></div>
<div class="l" style="left:26px;top:714px;width:503px;height:1px;background:#bbb"></div>
<div class="box" style="left:30px;top:451px"></div>
<div class="box" style="left:30px;top:662px"></div>
<div class="box" style="left:30px;top:700px"></div>
<div class="t b" style="left:44px;top:449px">Document</div>
<div class="t b" style="left:44px;top:660px">Notes</div>
<div class="t b" style="left:44px;top:698px">Miscelaneous</div>
<div class="t" style="left:57px;top:468px">Group</div>
<div class="t" style="left:57px;top:488px">Name</div>
<div class="t" style="left:57px;top:515px">Stored file</div>
<div class="t" style="left:57px;top:535px">Original file</div>
<div class="t" style="left:57px;top:562px">Original folder</div>
<div class="t" style="left:57px;top:581px">File type</div>
<div class="t" style="left:57px;top:601px">File size (bytes)</div>
<div class="t" style="left:57px;top:620px">File date</div>
<div class="t" style="left:57px;top:640px">Compressed</div>
<div class="t" style="left:57px;top:679px">Notes</div>
<div class="t" style="left:230px;top:468px">Images</div>
<div class="t b" style="left:231px;top:488px;letter-spacing:.15px">Softpedia_Image.jpg</div>
<div class="t" style="left:251px;top:515px">Yes</div>
<div class="t" style="left:230px;top:535px">Image.jpg</div>
<div class="t" style="left:230px;top:562px">C:\Temp</div>
<div class="t" style="left:230px;top:581px">Images</div>
<div class="t" style="left:230px;top:601px">930</div>
<div class="t" style="left:230px;top:620px">4/22/2008 1:11:00 PM</div>
<div class="t" style="left:251px;top:640px">No</div>
<div class="t" style="left:230px;top:679px">This file has been stored with this password: admin</div>
<svg class="a" style="left:233px;top:514px" width="13" height="16"><use href="#chk" width="13" height="16"/></svg>
<svg class="a" style="left:231px;top:640px" width="16" height="15"><use href="#rx" width="16" height="15"/></svg>
<div style="left:498px;top:488px;width:28px;height:22px;background:#f2f2f2;border:1px solid #999"></div>
<svg class="a" style="left:501px;top:490px" width="23" height="19"><use href="#pgr" width="23" height="19"/></svg>
<div style="left:468px;top:535px;width:28px;height:22px;background:#eee;border:1px solid #ddd"></div>
<div style="left:498px;top:535px;width:28px;height:22px;background:#eee;border:1px solid #ddd"></div>
<svg class="a" style="left:472px;top:537px" width="20" height="18"><path d="M1 1l18 8.500L1 18z" fill="#b0b0b0"/></svg>
<svg class="a" style="left:503px;top:537px" width="18" height="18"><path d="M1 1l16 16M17 1L1 17" stroke="#aaa" stroke-width="1.800"/></svg>

<!-- detail right -->
<div class="sec" style="left:532px;top:446px;width:14px;height:78px"></div>
<div class="sec" style="left:532px;top:524px;width:501px;height:19px"></div>
<div class="sec" style="left:532px;top:543px;width:14px;height:171px"></div>
<div class="lab" style="left:546px;top:446px;width:187px;height:78px"></div>
<div class="lab" style="left:546px;top:543px;width:187px;height:171px"></div>
<div class="l" style="left:545px;top:446px;width:1px;height:78px;background:#bbb"></div>
<div class="l" style="left:545px;top:543px;width:1px;height:171px;background:#bbb"></div>
<div class="l" style="left:732px;top:446px;width:1px;height:78px;background:#bbb"></div>
<div class="l" style="left:732px;top:543px;width:1px;height:171px;background:#bbb"></div>
<div class="l" style="left:1033px;top:446px;width:1px;height:268px;background:#bbb"></div>
<div class="l" style="left:546px;top:466px;width:488px;height:1px;background:#bbb"></div>
<div class="l" style="left:546px;top:485px;width:488px;height:1px;background:#bbb"></div>
<div class="l" style="left:546px;top:505px;width:488px;height:1px;background:#bbb"></div>
<div class="l" style="left:532px;top:524px;width:502px;height:1px;background:#bbb"></div>
<div class="l" style="left:532px;top:543px;width:502px;height:1px;background:#bbb"></div>
<div class="l" style="left:532px;top:714px;width:502px;height:1px;background:#bbb"></div>
<div class="box" style="left:535px;top:529px"></div>
<div class="t" style="left:562px;top:449px">Updated</div>
<div class="t" style="left:562px;top:469px">Updated by</div>
<div class="t" style="left:562px;top:488px">Created</div>
<div class="t" style="left:562px;top:508px">Created by</div>
<div class="t b" style="left:549px;top:527px">Image</div>
<div class="t" style="left:562px;top:546px">Image</div>
<div class="t" style="left:735px;top:449px">3/13/2013 2:08:29 PM</div>
<div class="t" style="left:735px;top:469px">SoftpediaEditor</div>
<div class="t" style="left:735px;top:488px">4/22/2008 1:15:01 PM</div>
<div class="t" style="left:735px;top:508px">MSD</div>
<div style="left:734px;top:545px;width:298px;height:167px;background:linear-gradient(#112a70 0,#112a70 20%,#000040 52%,#000038 62%,#000 80%)"></div>
<div class="t" style="left:845px;top:621px;height:16px;line-height:16px;font-size:13px;color:#fff;font-weight:bold;margin-top:0">SOFTPEDIA</div>

<!-- status -->
<div style="left:20px;top:739px;width:1027px;height:26px;background:#f0f0f0;border-top:1px solid #aaa"></div>
<div style="left:21px;top:741px;width:670px;height:23px;border:1px solid #ccc;border-right:0;border-bottom:0"></div>
<div class="l" style="left:691px;top:741px;width:1px;height:23px"></div>
<div class="l" style="left:778px;top:741px;width:1px;height:23px"></div>
<div class="l" style="left:802px;top:741px;width:1px;height:23px"></div>
<div class="l" style="left:962px;top:741px;width:1px;height:23px"></div>
<div class="l" style="left:1021px;top:741px;width:1px;height:23px"></div>
<div class="t" style="left:698px;top:745px">SoftpediaEditor</div>
<div class="t b" style="left:808px;top:745px;color:#1414a0">Wednesday, March 13, 2013</div>
<div class="t b" style="left:968px;top:745px;color:#1414a0">02:10 PM</div>
<svg class="a" style="left:783px;top:745px" width="13" height="15"><path d="M3 7V4a3.500 3.500 0 0 1 7 0v3" fill="none" stroke="#aaa" stroke-width="1.500"/><path d="M1 7h11v8H1z" fill="#d89a3c"/></svg>
<svg class="a" style="left:1025px;top:745px" width="17" height="15" viewBox="0 0 17 15"><path d="M2 14C0 6 6 2 11 5l5-4v10h-4M5 14c-1-4 2-6 5-4" fill="#f4e8b0" stroke="#b08420" stroke-width="1.200"/></svg>

<!-- dropdown menu -->
<div style="left:204px;top:62px;width:239px;height:126px;background:#f0f0f0;border:1px solid #a0a0a0;box-shadow:3px 3px 4px rgba(0,0,0,.4)"></div>
<div class="t m" style="left:237px;top:68px">Compress databases</div>
<div class="t m" style="left:237px;top:89px">Repair corrupted databases</div>
<div class="t m" style="left:237px;top:118px">Initialize data grids configuration</div>
<div class="t m" style="left:237px;top:139px">Delete sample records</div>
<div style="left:207px;top:110px;width:232px;height:1px;background:#a8a8a8"></div>
<div style="left:207px;top:160px;width:232px;height:1px;background:#a8a8a8"></div>
<div style="left:207px;top:164px;width:233px;height:21px;background:#3399ff"></div>
<svg class="a" style="left:208px;top:64px" width="24" height="20" viewBox="0 0 24 20"><path d="M1 6h16v10H1z" fill="#aab4c0" stroke="#445"/><path d="M4 9h10v4H4z" fill="#eef"/><path d="M15 1h8M19 1v16M15 18h8" stroke="#246" stroke-width="1.500"/></svg>
<svg class="a" style="left:209px;top:85px" width="24" height="20" viewBox="0 0 24 20"><path d="M1 2h12v17H1z" fill="#8a8060" stroke="#444"/><path d="M5 3h5v15H5z" fill="#c8c0a0"/><path d="M9 10l3-3 3 2 3-2 3 3-1 3 2 2-4 3-3-1-3 1-3-4z" fill="#e0981c" stroke="#8a5a00" stroke-width=".6"/></svg>
<svg class="a" style="left:210px;top:115px" width="21" height="19" viewBox="0 0 21 19"><path d="M1 1h19v17H1z" fill="#fff" stroke="#8898b0"/><path d="M1 6h19M1 12h19M7 1v17M14 1v17" stroke="#5aa0e8"/><path d="M2 2l17 15M19 2L2 17" stroke="#ee3a1c" stroke-width="1.800"/></svg>
<svg class="a" style="left:211px;top:136px" width="19" height="19"><use href="#db" width="19" height="19"/><path d="M1 1l17 17M18 1L1 18" stroke="#ee3a1c" stroke-width="1.800"/></svg>
<div class="t" style="left:177px;top:112px;width:110px;height:24px;line-height:24px;font-size:24px;color:rgba(255,255,255,.2);font-family:'Liberation Serif',serif;letter-spacing:1px;margin-top:0">SOFTPEDIA</div>
</body></html>
